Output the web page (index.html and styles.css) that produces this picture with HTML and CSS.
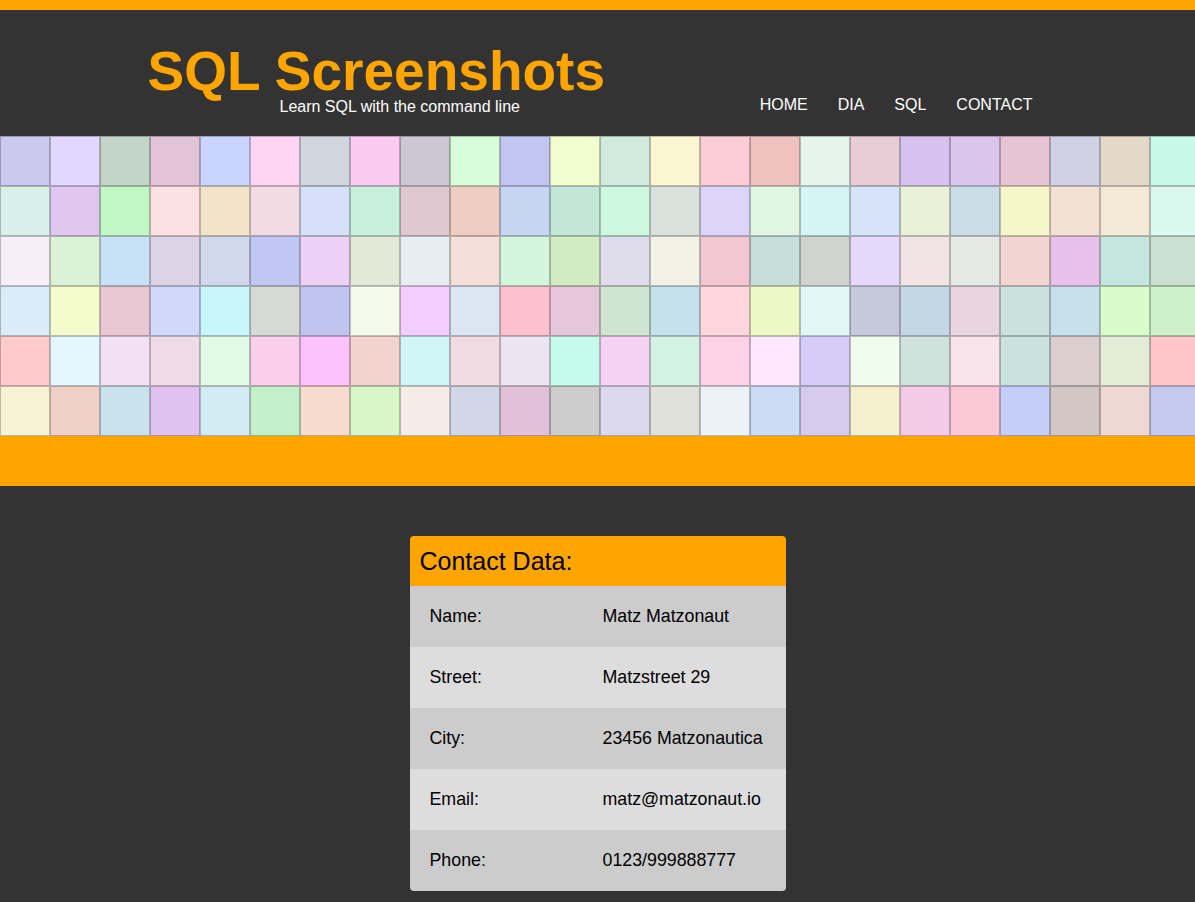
FILE: index.html
```html
<!DOCTYPE html>
<html lang="en">
<head>
<meta charset="utf-8">
<title>SQL Screenshots - Contact</title>
<link rel="stylesheet" href="styles.css">
</head>
<body>
<div class="topbar"></div>
<header class="header">
  <div class="header-inner">
    <div class="brand">
      <h1 class="brand-title">SQL Screenshots</h1>
      <div class="brand-sub">Learn SQL with the command line</div>
    </div>
    <nav class="nav">
      <a class="nav-link" href="#">HOME</a>
      <a class="nav-link" href="#">DIA</a>
      <a class="nav-link" href="#">SQL</a>
      <a class="nav-link" href="#">CONTACT</a>
    </nav>
  </div>
</header>
<div class="mosaic">
<div class="tile" style="background:#cdc8ee"></div><div class="tile" style="background:#e0d8ff"></div><div class="tile" style="background:#c2d5c6"></div><div class="tile" style="background:#e3c3d8"></div><div class="tile" style="background:#cad5ff"></div><div class="tile" style="background:#fdd5f3"></div><div class="tile" style="background:#cfd6de"></div><div class="tile" style="background:#fbcaf0"></div><div class="tile" style="background:#cbc7d3"></div><div class="tile" style="background:#d7fdd9"></div><div class="tile" style="background:#c2c4f2"></div><div class="tile" style="background:#f3fdcf"></div><div class="tile" style="background:#d2e9df"></div><div class="tile" style="background:#faf7d0"></div><div class="tile" style="background:#facdd6"></div><div class="tile" style="background:#efc2c0"></div><div class="tile" style="background:#e6f5eb"></div><div class="tile" style="background:#e8cdd7"></div><div class="tile" style="background:#d6c2ee"></div><div class="tile" style="background:#dac5ee"></div><div class="tile" style="background:#e8c3d1"></div><div class="tile" style="background:#d1d0e5"></div><div class="tile" style="background:#e3d9c8"></div><div class="tile" style="background:#c9f7e8"></div>
<div class="tile" style="background:#d8efea"></div><div class="tile" style="background:#e0c7f2"></div><div class="tile" style="background:#c1f8c6"></div><div class="tile" style="background:#fbe1e1"></div><div class="tile" style="background:#f1e4c8"></div><div class="tile" style="background:#f3dbe3"></div><div class="tile" style="background:#d6e0f8"></div><div class="tile" style="background:#c8f0db"></div><div class="tile" style="background:#dfc8cf"></div><div class="tile" style="background:#efcdc2"></div><div class="tile" style="background:#c6d5f1"></div><div class="tile" style="background:#c2e6d8"></div><div class="tile" style="background:#cdf9e0"></div><div class="tile" style="background:#d9e1dc"></div><div class="tile" style="background:#dcd4f9"></div><div class="tile" style="background:#e0f6e2"></div><div class="tile" style="background:#d3f5f4"></div><div class="tile" style="background:#d7e3f8"></div><div class="tile" style="background:#e9f2d8"></div><div class="tile" style="background:#cadde6"></div><div class="tile" style="background:#f5f7cb"></div><div class="tile" style="background:#f2e0d2"></div><div class="tile" style="background:#f3e9d6"></div><div class="tile" style="background:#dbf8ef"></div>
<div class="tile" style="background:#f8eefa"></div><div class="tile" style="background:#dcf2d6"></div><div class="tile" style="background:#c8e2f5"></div><div class="tile" style="background:#dcd4e6"></div><div class="tile" style="background:#d1d8eb"></div><div class="tile" style="background:#c1c7f4"></div><div class="tile" style="background:#ecd0f6"></div><div class="tile" style="background:#e2ead7"></div><div class="tile" style="background:#e8edf4"></div><div class="tile" style="background:#f3dfd8"></div><div class="tile" style="background:#d3f5db"></div><div class="tile" style="background:#d2ecc2"></div><div class="tile" style="background:#dfdceb"></div><div class="tile" style="background:#f1f2e5"></div><div class="tile" style="background:#f3c6d4"></div><div class="tile" style="background:#c6dfd9"></div><div class="tile" style="background:#cfd4cf"></div><div class="tile" style="background:#e6d8fa"></div><div class="tile" style="background:#f1e4e5"></div><div class="tile" style="background:#e5e9e5"></div><div class="tile" style="background:#f0d5d1"></div><div class="tile" style="background:#e8c0e9"></div><div class="tile" style="background:#c5e6de"></div><div class="tile" style="background:#cce0d2"></div>
<div class="tile" style="background:#dbecf9"></div><div class="tile" style="background:#f4fccd"></div><div class="tile" style="background:#e9c8d3"></div><div class="tile" style="background:#d0d9fa"></div><div class="tile" style="background:#c9f6fa"></div><div class="tile" style="background:#d5dad6"></div><div class="tile" style="background:#c0c4ef"></div><div class="tile" style="background:#f5fbeb"></div><div class="tile" style="background:#f2cdfd"></div><div class="tile" style="background:#dbe6f3"></div><div class="tile" style="background:#fdc1cd"></div><div class="tile" style="background:#e6c6da"></div><div class="tile" style="background:#cfe5cf"></div><div class="tile" style="background:#c4e1ec"></div><div class="tile" style="background:#fdd7dc"></div><div class="tile" style="background:#eef7c6"></div><div class="tile" style="background:#e1f6f5"></div><div class="tile" style="background:#c6c8dc"></div><div class="tile" style="background:#c4d7e4"></div><div class="tile" style="background:#e8d5dd"></div><div class="tile" style="background:#cbe2dc"></div><div class="tile" style="background:#c8e0ec"></div><div class="tile" style="background:#d9fbcc"></div><div class="tile" style="background:#cef0cb"></div>
<div class="tile" style="background:#ffcacb"></div><div class="tile" style="background:#e4f6fe"></div><div class="tile" style="background:#f3e0f3"></div><div class="tile" style="background:#efdce8"></div><div class="tile" style="background:#e2fbe4"></div><div class="tile" style="background:#f9cfe9"></div><div class="tile" style="background:#fdc1fc"></div><div class="tile" style="background:#f3d3cd"></div><div class="tile" style="background:#cff5f5"></div><div class="tile" style="background:#f2dce3"></div><div class="tile" style="background:#ede4f1"></div><div class="tile" style="background:#c5fbea"></div><div class="tile" style="background:#f6d1f6"></div><div class="tile" style="background:#d3f2e3"></div><div class="tile" style="background:#fdd2e9"></div><div class="tile" style="background:#fde7fc"></div><div class="tile" style="background:#d5cdf7"></div><div class="tile" style="background:#effcee"></div><div class="tile" style="background:#cfe2dc"></div><div class="tile" style="background:#f8e3ea"></div><div class="tile" style="background:#cbe0e1"></div><div class="tile" style="background:#dbced0"></div><div class="tile" style="background:#e3ecd6"></div><div class="tile" style="background:#fdc6c8"></div>
<div class="tile" style="background:#f8f2d5"></div><div class="tile" style="background:#f1d1c7"></div><div class="tile" style="background:#c9e2ee"></div><div class="tile" style="background:#e1c1ef"></div><div class="tile" style="background:#d3ebf3"></div><div class="tile" style="background:#c3f0c8"></div><div class="tile" style="background:#f7dbcd"></div><div class="tile" style="background:#d8f7c8"></div><div class="tile" style="background:#f5ebe8"></div><div class="tile" style="background:#d2d7e8"></div><div class="tile" style="background:#e1c1d8"></div><div class="tile" style="background:#cccccc"></div><div class="tile" style="background:#dcd9ee"></div><div class="tile" style="background:#e0e1da"></div><div class="tile" style="background:#ecf2f7"></div><div class="tile" style="background:#cbdcf4"></div><div class="tile" style="background:#d6cbec"></div><div class="tile" style="background:#f4efcc"></div><div class="tile" style="background:#f4cbe7"></div><div class="tile" style="background:#fac8d6"></div><div class="tile" style="background:#c4cef9"></div><div class="tile" style="background:#d2c7c5"></div><div class="tile" style="background:#eed8d2"></div><div class="tile" style="background:#c6c9ef"></div>
</div>
<div class="orangebar"></div>
<main class="main">
  <section class="card">
    <h2 class="card-title">Contact Data:</h2>
    <div class="row odd"><span class="label">Name:</span><span class="value">Matz Matzonaut</span></div>
    <div class="row even"><span class="label">Street:</span><span class="value">Matzstreet 29</span></div>
    <div class="row odd"><span class="label">City:</span><span class="value">23456 Matzonautica</span></div>
    <div class="row even"><span class="label">Email:</span><span class="value">matz@matzonaut.io</span></div>
    <div class="row odd"><span class="label">Phone:</span><span class="value">0123/999888777</span></div>
  </section>
</main>
</body>
</html>
```

FILE: styles.css
```css
* { box-sizing: border-box; }

html, body {
  margin: 0;
  padding: 0;
  background: #333333;
  font-family: "Liberation Sans", Arial, sans-serif;
  overflow: hidden;
}

.topbar {
  height: 10px;
  background: #ffa500;
}

.header {
  height: 126px;
  padding-top: 33.5px;
}

.header-inner {
  width: 900px;
  margin: 0 auto;
  display: flex;
  justify-content: space-between;
  align-items: flex-start;
}

.brand-title {
  margin: 0;
  font-size: 55px;
  line-height: 55px;
  font-weight: bold;
  color: #ffa500;
}

.brand-sub {
  padding-left: 132px;
  font-size: 16px;
  line-height: 16px;
  color: #ffffff;
}

.nav {
  display: flex;
  margin-top: 53px;
}

.nav-link {
  display: block;
  padding: 0 15px;
  font-size: 16px;
  line-height: 16px;
  color: #ffffff;
  text-decoration: none;
}

.mosaic {
  width: 100%;
  height: 300px;
  overflow: hidden;
  display: grid;
  grid-template-columns: repeat(24, 50px);
  grid-auto-rows: 50px;
}

.tile {
  width: 50px;
  height: 50px;
  border: 1px solid rgba(0, 0, 0, 0.24);
}

.orangebar {
  height: 50px;
  background: #ffa500;
}

.main {
  display: flex;
  justify-content: center;
  padding-top: 50px;
}

.card {
  width: 376px;
  border-radius: 4px;
  overflow: hidden;
}

.card-title {
  margin: 0;
  height: 50px;
  padding-left: 10px;
  background: #ffa500;
  color: #000;
  font-size: 25px;
  line-height: 50px;
  font-weight: normal;
}

.row {
  display: grid;
  grid-template-columns: 193px 1fr;
  height: 61px;
  font-size: 17.8px;
  line-height: 61px;
  color: #000;
}

.row.odd { background: #cccccc; }
.row.even { background: #dddddd; }

.label { padding-left: 20px; }
```
